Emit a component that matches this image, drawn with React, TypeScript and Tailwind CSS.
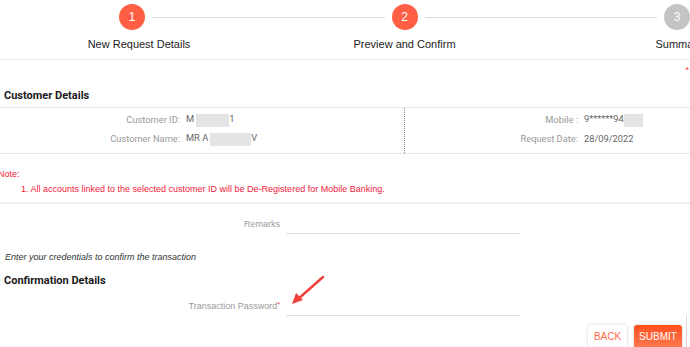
import React from "react";

const steps = [
  { n: 1, label: "New Request Details", active: true, shift: "translate-x-[7px]" },
  { n: 2, label: "Preview and Confirm", active: true, shift: "" },
  { n: 3, label: "Summary", active: false, shift: "translate-x-[2px]" },
];

function Blur({ w }: { w: string }) {
  return <span className={`inline-block h-[13px] align-middle bg-[#e4e4e4] ${w}`} />;
}

function Stepper() {
  return (
    <div className="h-[60px] border-b border-[#ececec] flex items-start pl-[119px] pt-[4px] font-['Liberation_Sans',Arial,sans-serif]">
      {steps.map((s, i) => (
        <React.Fragment key={s.n}>
          {i > 0 && <div className="flex-1 h-px bg-[#dcdcdc] mt-[13px] mx-[7px]" />}
          <div className="w-[26px] shrink-0 flex flex-col items-center">
            <div
              className={`w-[26px] h-[26px] rounded-full flex items-center justify-center text-[12px] text-white ${
                s.active ? "bg-[#ff5f45]" : "bg-[#c4c4c4]"
              }`}
            >
              {s.n}
            </div>
            <div className={`mt-[6px] whitespace-nowrap text-[11px] text-[#222] ${s.shift}`}>{s.label}</div>
          </div>
        </React.Fragment>
      ))}
    </div>
  );
}

function InfoRow({ label, children, lw }: { label: string; children: React.ReactNode; lw: string }) {
  return (
    <div className="flex items-center h-[19px]">
      <div className={`${lw} text-right text-[#9a9a9a] shrink-0`}>{label}</div>
      <div className="pl-[6px] text-[#666] whitespace-nowrap">{children}</div>
    </div>
  );
}

function FieldRow({ label, required }: { label: string; required?: boolean }) {
  return (
    <div className="flex items-end">
      <div className="w-[280px] text-right text-[9px] text-[#9a9a9a] pb-[2px] font-['Liberation_Sans',Arial,sans-serif]">
        {label}
        {required && <span className="text-[#f03030] text-[7px] align-top">*</span>}
      </div>
      <div className="ml-[6px] w-[235px] h-[20px] border-b border-[#e2e2e2]" />
    </div>
  );
}

export default function App() {
  return (
    <div className="relative w-[690px] h-[347px] overflow-hidden bg-white font-['Roboto',sans-serif]">
      <Stepper />

      <div className="h-[25px] flex justify-end pr-[1px] pt-[6px]">
        <span className="text-[#f03030] text-[8px] leading-none">*</span>
      </div>

      <h2 className="px-[4px] h-[22px] text-[11px] font-bold text-[#1a1a1a] leading-[22px]">Customer Details</h2>

      <div className="border-y border-[#e6e6e6] flex text-[9.3px] h-[47px] pt-[2px]">
        <div className="w-[405px] border-r border-dotted border-[#888] -mt-[2px] pt-[2px]">
          <InfoRow label="Customer ID:" lw="w-[180px]">
            M<Blur w="w-[33px] ml-[2px]" />1
          </InfoRow>
          <InfoRow label="Customer Name:" lw="w-[180px]">
            MR A<Blur w="w-[41px] ml-[2px]" />V
          </InfoRow>
        </div>
        <div className="flex-1">
          <InfoRow label="Mobile :" lw="w-[173px]">
            9******94<Blur w="w-[19px]" />
          </InfoRow>
          <InfoRow label="Request Date:" lw="w-[173px]">
            28/09/2022
          </InfoRow>
        </div>
      </div>

      <div className="border-b-2 border-[#eeeeee] pt-[14px] pb-[5px] text-[9px] text-[#f2203c] font-['Liberation_Sans',Arial,sans-serif]">
        <div className="-ml-[2px] h-[14px]">Note:</div>
        <div className="pl-[21px] pt-[1px]">1. All accounts linked to the selected customer ID will be De-Registered for Mobile Banking.</div>
      </div>

      <div className="pt-[10px]">
        <FieldRow label="Remarks" />
      </div>

      <p className="pl-[5px] pt-[17px] text-[9px] italic text-[#333] font-['Liberation_Sans',Arial,sans-serif]">
        Enter your credentials to confirm the transaction
      </p>

      <h2 className="px-[4px] pt-[9px] text-[11px] font-bold text-[#1a1a1a]">Confirmation Details</h2>

      <div className="pt-[6px]">
        <FieldRow label="Transaction Password" required />
      </div>

      <div className="flex justify-end gap-[7px] pr-[8px] pt-[9px] text-[10px] font-['Liberation_Sans',Arial,sans-serif]">
        <button className="w-[39px] h-[24px] rounded-[3px] bg-white text-[#ff6a45] shadow-[0_0_3px_rgba(0,0,0,0.2)]">BACK</button>
        <button className="w-[48px] h-[24px] rounded-[3px] text-white bg-gradient-to-b from-[#ff4e1a] to-[#ff7a50] shadow-[0_0_3px_rgba(0,0,0,0.2)]">
          SUBMIT
        </button>
      </div>
      <div className="absolute right-[3px] top-[315px] w-px h-[32px] bg-[#dddddd]" />

      <svg className="absolute left-[288px] top-[274px]" width="40" height="36" viewBox="0 0 40 36">
        <line x1="35" y1="3" x2="9" y2="26" stroke="#f0403a" strokeWidth="2.4" strokeLinecap="round" />
        <path d="M4 30 L8 19 L15 26 Z" fill="#f0403a" />
      </svg>
    </div>
  );
}
